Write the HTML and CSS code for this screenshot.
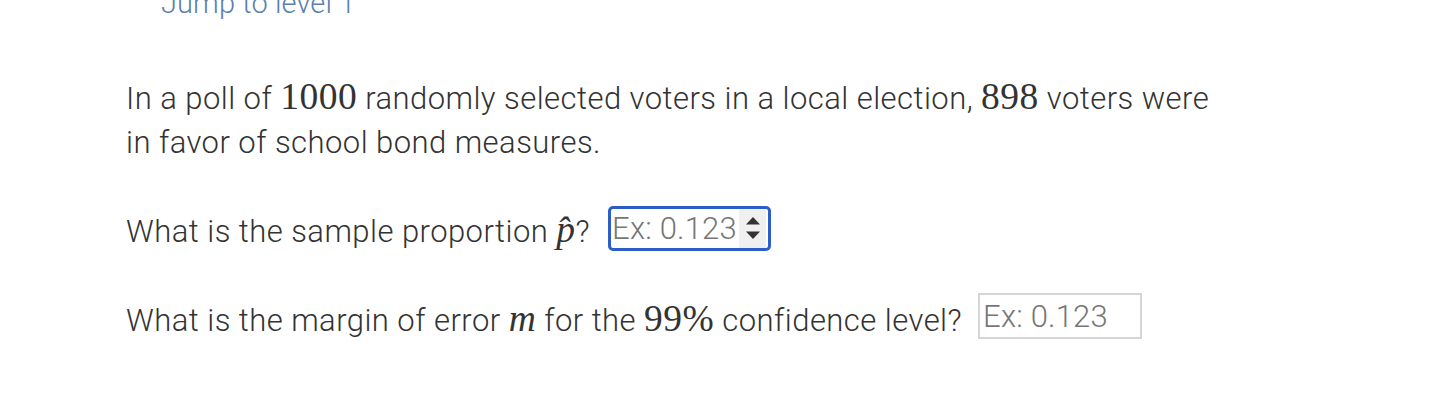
FILE: index.html
```html
<!DOCTYPE html>
<html lang="en">
<head>
<meta charset="utf-8">
<title>Sample proportion</title>
<link rel="stylesheet" href="styles.css">
</head>
<body>
<div class="page">
  <div class="jump-row"><a class="jump" href="#">Jump to level 1</a></div>
  <p class="para">In a poll of <span class="math">1000</span> randomly selected voters in a local election, <span class="math">898</span> voters were in favor of school bond measures.</p>
  <div class="question q1">
    <span>What is the sample proportion <span class="math mi">p&#770;</span>?</span>
    <label class="field focused">
      <input class="field-input" type="text" placeholder="Ex: 0.123">
      <span class="spinner">
        <svg width="16" height="26" viewBox="0 0 16 26"><path d="M1 9.5 L8 2 L15 9.5 Z" fill="#333"/><path d="M1 16.5 L8 24 L15 16.5 Z" fill="#333"/></svg>
      </span>
    </label>
  </div>
  <div class="question q2">
    <span>What is the margin of error <span class="math mi">m</span> for the <span class="math">99%</span> confidence level?</span>
    <label class="field plain">
      <input class="field-input" type="text" placeholder="Ex: 0.123">
    </label>
  </div>
</div>
</body>
</html>
```
FILE: styles.css
```css
html, body {
  margin: 0;
  padding: 0;
  background: #ffffff;
}
body {
  font-family: Roboto, "Liberation Sans", sans-serif;
  font-weight: 300;
  color: #333333;
  font-size: 31px;
  letter-spacing: 0.45px;
}
.page {
  padding-left: 126px;
}
.jump-row {
  margin-top: -13px;
  padding-left: 35px;
  height: 32px;
  line-height: 32px;
}
.jump {
  color: #5b7fae;
  text-decoration: none;
  font-size: 29px;
  letter-spacing: 0.1px;
}
.para {
  margin: 58px 0 0 0;
  max-width: 1100px;
  line-height: 44px;
}
.math {
  font-family: "Liberation Serif", "DejaVu Serif", serif;
  font-weight: 400;
  font-size: 1.21em;
  letter-spacing: 0.5px;
  line-height: 1;
}
.mi {
  font-style: italic;
}
.question {
  display: flex;
  align-items: center;
  gap: 16px;
  line-height: 44px;
}
.q1 {
  margin-top: 45px;
  gap: 18px;
}
.q2 {
  margin-top: 45px;
}
.field {
  display: flex;
  align-items: stretch;
  box-sizing: border-box;
  background: #fff;
}
.field-input {
  border: none;
  outline: none;
  padding: 0 0 0 1px;
  margin: 0;
  font-family: Roboto, "Liberation Sans", sans-serif;
  font-weight: 300;
  font-size: 31px;
  letter-spacing: 0.2px;
  color: #333;
  background: transparent;
}
.field-input::placeholder {
  color: #767676;
}
.focused {
  width: 163px;
  height: 45px;
  border: 3px solid #2b5ec9;
  border-radius: 5px;
  margin-top: -8px;
}
.focused .field-input {
  width: 127px;
}
.spinner {
  display: flex;
  align-items: center;
  justify-content: center;
  width: 30px;
  margin: 0 2px 0 0;
  background: #f0f0f0;
}
.plain {
  width: 164px;
  height: 46px;
  border: 2px solid #d3d7d9;
  margin-top: -10px;
}
.plain .field-input {
  width: 100%;
  padding-left: 3px;
}
```
